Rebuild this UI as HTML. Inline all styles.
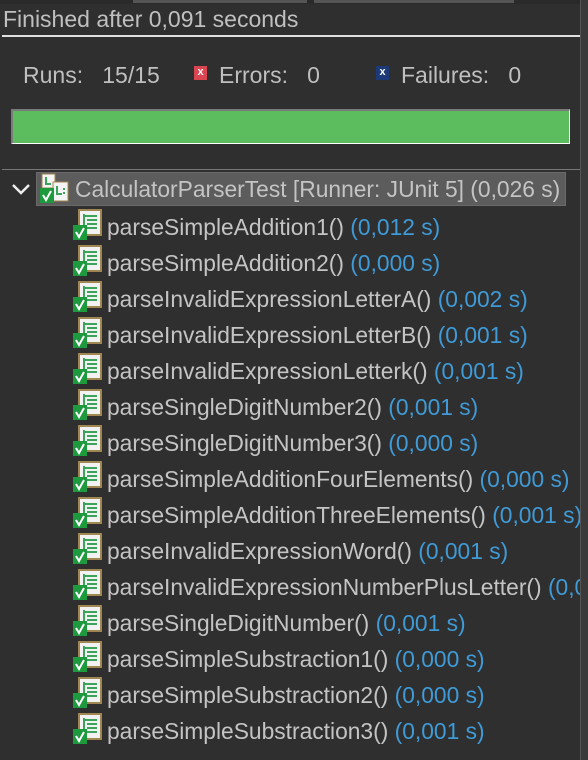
<!DOCTYPE html>
<html><head><style>
body{margin:0;width:588px;height:760px;background:#2f2f2f;overflow:hidden;font-family:"Liberation Sans",sans-serif;color:#bfbfbf;position:relative}
.a{position:absolute}
.row{position:absolute;left:0;height:30px;white-space:nowrap;font-size:22.8px;color:#c4c4c4;line-height:30px}
.row .t{color:#3f9ad6}
.ic{position:absolute;left:0;top:-3px;width:32px;height:32px}
.row span.n{position:absolute;left:35px}
#rows{position:absolute;left:72px;top:0;width:508px;height:760px;overflow:hidden}
</style></head><body>
<div class="a" style="left:0;top:0;width:588px;height:4px;background:#2a2a2a"></div>
<div class="a" style="left:133px;top:0;width:174px;height:3px;background:#555"></div>
<div class="a" style="left:314px;top:0;width:200px;height:3px;background:#555"></div>
<div class="a" style="left:580px;top:0;width:7px;height:760px;background:#3a3a3a;border-left:1px solid #555;z-index:5"></div>
<div class="a" style="left:3px;top:6px;font-size:23px;color:#c0c0c0">Finished after 0,091 seconds</div>
<div class="a" style="left:2px;top:35px;width:578px;height:2px;background:#e0e0e0"></div>
<div class="a" style="left:23px;top:62px;font-size:23px">Runs:&nbsp;&nbsp; 15/15</div>
<div class="a" style="left:194px;top:66px;width:13px;height:14px;background:#d94550;color:#fff;font-size:11px;font-weight:bold;text-align:center;line-height:13px">x</div>
<div class="a" style="left:219px;top:62px;font-size:23px">Errors:&nbsp;&nbsp; 0</div>
<div class="a" style="left:376px;top:66px;width:13px;height:14px;background:#1c3a78;color:#fff;font-size:11px;font-weight:bold;text-align:center;line-height:13px">x</div>
<div class="a" style="left:401px;top:62px;font-size:23px">Failures:&nbsp;&nbsp; 0</div>
<div class="a" style="left:11px;top:109px;width:559px;height:35px;background:#5cbd5e;border-top:2px solid #7a7a7a;border-left:2px solid #7a7a7a;border-right:1px solid #fff;border-bottom:1px solid #fff;box-sizing:border-box"></div>
<div class="a" style="left:2px;top:169px;width:578px;height:1px;background:#777"></div>
<svg class="a" style="left:10px;top:180px" width="24" height="20"><path d="M3 5 L11 13 L19 5" stroke="#eee" stroke-width="2.5" fill="none"/></svg>
<div class="a" style="left:36px;top:172px;width:530px;height:34px;background:#5c5c5c;border:1px solid #6a6a6a;box-sizing:border-box"></div>
<svg class="a" style="left:38px;top:173px" width="34" height="32"><rect x="4" y="1" width="13" height="14" fill="#f4f4f4" stroke="#a08650"/><path d="M8 4v7h5" stroke="#3aa55a" stroke-width="2" fill="none"/><rect x="15" y="9" width="15" height="19" fill="#f4f4f4" stroke="#a08650"/><path d="M19 13v8h5M25 16h2M25 20h2" stroke="#3aa55a" stroke-width="2" fill="none"/><rect x="2" y="15" width="14" height="15" fill="#1e9a3e"/><path d="M5 22 L8 27 L13 18" stroke="#fff" stroke-width="2" fill="none"/></svg>
<div class="a" style="left:75px;top:175px;font-size:22.8px;line-height:28px;color:#c4c4c4;white-space:nowrap">CalculatorParserTest [Runner: JUnit 5] (0,026 s)</div>
<div id="rows"></div>
<script>
var d=[["parseSimpleAddition1()","(0,012 s)"],["parseSimpleAddition2()","(0,000 s)"],["parseInvalidExpressionLetterA()","(0,002 s)"],["parseInvalidExpressionLetterB()","(0,001 s)"],["parseInvalidExpressionLetterk()","(0,001 s)"],["parseSingleDigitNumber2()","(0,001 s)"],["parseSingleDigitNumber3()","(0,000 s)"],["parseSimpleAdditionFourElements()","(0,000 s)"],["parseSimpleAdditionThreeElements()","(0,001 s)"],["parseInvalidExpressionWord()","(0,001 s)"],["parseInvalidExpressionNumberPlusLetter()","(0,001 s)"],["parseSingleDigitNumber()","(0,001 s)"],["parseSimpleSubstraction1()","(0,000 s)"],["parseSimpleSubstraction2()","(0,000 s)"],["parseSimpleSubstraction3()","(0,001 s)"]];
var h="";
d.forEach(function(r,i){var y=212+i*36;
h+='<div class="row" style="top:'+y+'px"><svg class="ic" viewBox="0 0 32 32"><rect x="7" y="1" width="22" height="25" fill="#f2f2f2" stroke="#a08650" stroke-width="2"/><path d="M12 5v15M12 7h13M15 11h10M15 15h10M15 19h10" stroke="#3aa55a" stroke-width="2"/><rect x="1" y="16" width="14" height="15" fill="#1e9a3e"/><path d="M4 23 L7 28 L12 19" stroke="#fff" stroke-width="2" fill="none"/></svg><span class="n">'+r[0]+' <span class="t">'+r[1]+'</span></span></div>';});
document.getElementById("rows").innerHTML=h;
</script>
</body></html>
